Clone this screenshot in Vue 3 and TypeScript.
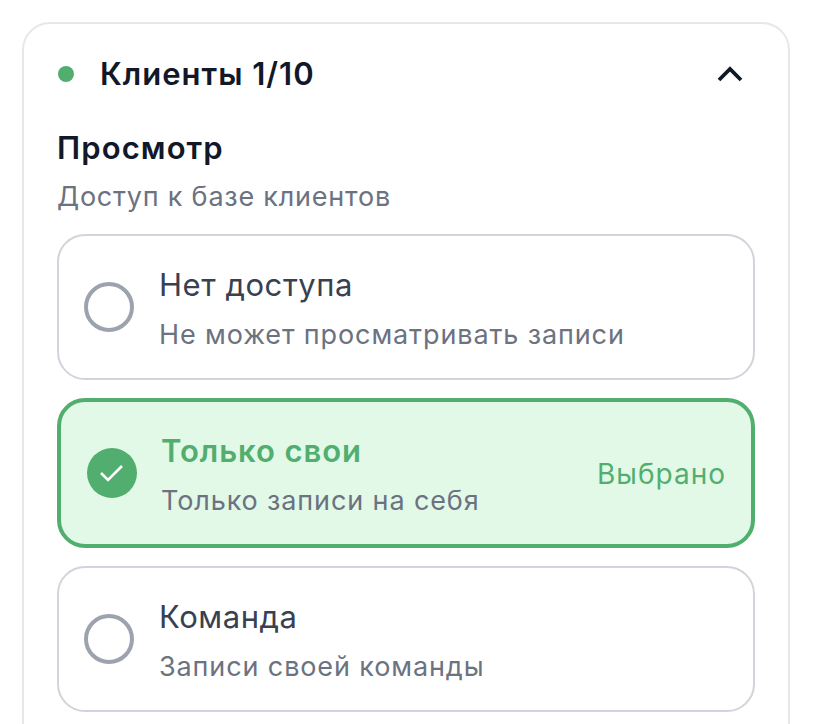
<script setup lang="ts">
interface Option {
  title: string
  desc: string
  selected?: boolean
}
const options: Option[] = [
  { title: 'Нет доступа', desc: 'Не может просматривать записи' },
  { title: 'Только свои', desc: 'Только записи на себя', selected: true },
  { title: 'Команда', desc: 'Записи своей команды' },
]
</script>

<template>
  <div class="page">
    <section class="card">
      <header class="head">
        <span class="dot"></span>
        <h2 class="name">Клиенты 1/10</h2>
        <svg class="chev" viewBox="0 0 28 18" width="28" height="18" fill="none">
          <path d="M3 15 L14 4 L25 15" stroke="#111827" stroke-width="3.8" />
        </svg>
      </header>
      <h3 class="sec">Просмотр</h3>
      <p class="sub">Доступ к базе клиентов</p>
      <div class="list">
        <div v-for="o in options" :key="o.title" class="opt" :class="{ on: o.selected }">
          <span v-if="o.selected" class="check">
            <svg viewBox="0 0 50 50" width="50" height="50" fill="none">
              <path d="M14 25 L21 32 L35 18" stroke="#fff" stroke-width="2.6" />
            </svg>
          </span>
          <span v-else class="radio"></span>
          <div class="txt">
            <div class="t">{{ o.title }}</div>
            <div class="d">{{ o.desc }}</div>
          </div>
          <span v-if="o.selected" class="tag">Выбрано</span>
        </div>
      </div>
    </section>
  </div>
</template>

<style>
html, body { background: #fff; overflow: hidden; }
</style>

<style scoped>
.page {
  width: 816px;
  height: 724px;
  overflow: hidden;
  box-sizing: border-box;
  padding: 22px 26px 0 22px;
  font-family: Inter, "Noto Sans", sans-serif;
}
.card {
  border: 2px solid #e5e7eb;
  border-radius: 28px;
  padding: 0 33px;
  height: 900px;
  box-sizing: border-box;
}
.head {
  display: flex;
  align-items: center;
  height: 100px;
  padding-right: 11px;
}
.dot {
  width: 16px;
  height: 16px;
  border-radius: 50%;
  background: #52ae6f;
  margin-left: 1px;
  margin-right: 26px;
}
.name {
  margin: 0;
  flex: 1;
  font-size: 31px;
  line-height: 40px;
  font-weight: 600;
  letter-spacing: 1px;
  color: #111827;
}
.sec {
  margin: 4px 0 0;
  font-size: 31px;
  line-height: 40px;
  font-weight: 600;
  letter-spacing: 1.1px;
  color: #111827;
}
.sub {
  margin: 11px 0 0;
  font-size: 27px;
  line-height: 36px;
  letter-spacing: 0.78px;
  color: #6b7280;
}
.list {
  margin-top: 19px;
  display: flex;
  flex-direction: column;
  gap: 18px;
}
.opt {
  display: flex;
  align-items: center;
  height: 146px;
  box-sizing: border-box;
  border: 2px solid #d1d5db;
  border-radius: 28px;
  padding: 0 28px 0 25px;
  background: #fff;
}
.opt.on {
  height: 150px;
  border: 4px solid #52ae6f;
  background: #e2f9e8;
  padding: 0 25px 0 26px;
}
.radio {
  width: 50px;
  height: 50px;
  box-sizing: border-box;
  border: 4px solid #9ca3af;
  border-radius: 50%;
  flex: none;
}
.check {
  width: 50px;
  height: 50px;
  border-radius: 50%;
  background: #52ae6f;
  flex: none;
}
.check svg { display: block; }
.txt {
  margin-left: 25px;
  padding-top: 3px;
  flex: 1;
}
.on .txt { margin-left: 24px; }
.t {
  font-size: 31px;
  line-height: 40px;
  letter-spacing: 0.55px;
  color: #374151;
}
.on .t {
  color: #52ae6f;
  font-weight: 600;
  letter-spacing: 0.95px;
}
.d {
  margin-top: 12px;
  font-size: 27px;
  line-height: 36px;
  letter-spacing: 0.88px;
  color: #6b7280;
}
.tag {
  padding-top: 2px;
  font-size: 28px;
  line-height: 36px;
  letter-spacing: 1px;
  color: #52ae6f;
}
</style>
